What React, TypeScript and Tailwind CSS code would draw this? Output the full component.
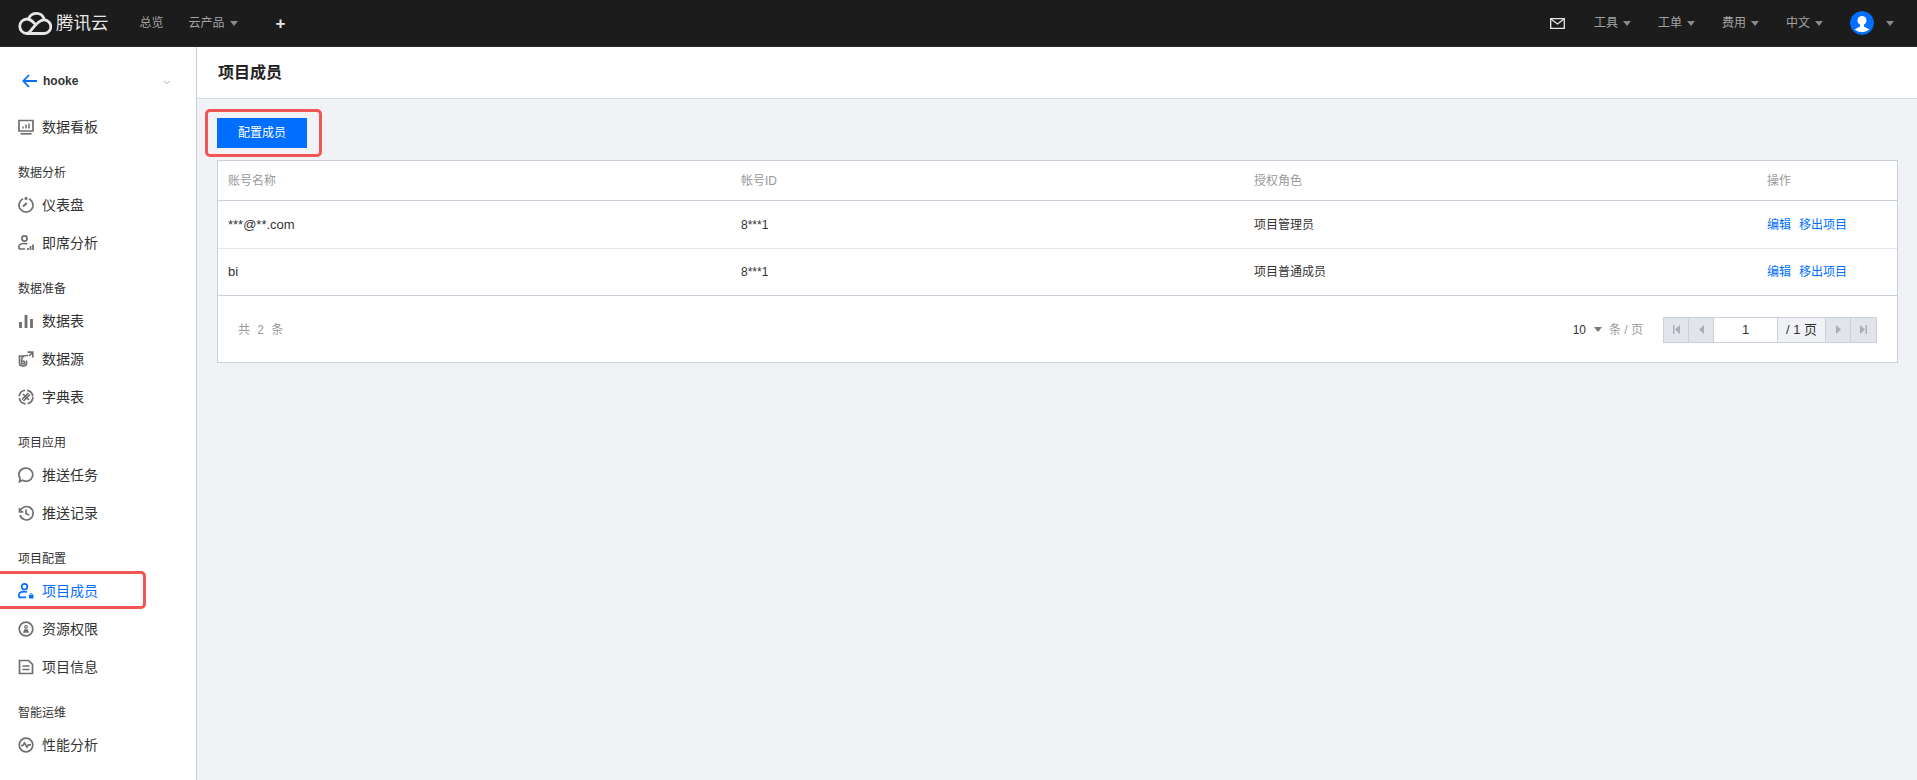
import type { ReactNode } from 'react';

const FONT = 'font-["Liberation_Sans","Noto_Sans_CJK_SC",sans-serif]';

function Caret({ className = 'border-t-[#8a8a8a]' }: { className?: string }) {
  return <span className={`inline-block w-0 h-0 border-x-[4px] border-x-transparent border-t-[5px] ${className}`} />;
}

function Logo() {
  return (
    <svg width="34" height="24" viewBox="0 0 34 24" fill="none" stroke="#e6e6e6" strokeWidth="2.800" strokeLinecap="round">
      <path d="M10.500 8.300a8.200 8.200 0 0 1 15.500-.8" />
      <path d="M9 22.500h17a6.800 6.800 0 0 0 0-13.600c-5 0-8.500 5.100-11.500 8.600-2 2.300-3.500 5-5.500 5a6.800 6.800 0 1 1 0-14.500c3 0 5.200 2 7 4" />
    </svg>
  );
}

function Icon({ children, color = '#6f6f6f' }: { children: ReactNode; color?: string }) {
  return (
    <svg width="16" height="16" viewBox="0 0 16 16" fill="none" stroke={color} strokeWidth="1.700" className="shrink-0">
      {children}
    </svg>
  );
}

const icons: Record<string, ReactNode> = {
  board: (
    <Icon>
      <path d="M1 1.500h14v10.500H1z" />
      <path d="M2.500 14.800h11" />
      <path d="M5 9.500V7.500M8 9.500V5.500M11 9.500V4.500" strokeWidth="1.500" />
    </Icon>
  ),
  gauge: (
    <Icon>
      <path d="M5 1.800a7 7 0 1 0 6 0" />
      <path d="M5 9.500l3.800-3.500" strokeWidth="2" />
      <circle cx="8" cy="1.500" r=".7" />
    </Icon>
  ),
  adhoc: (
    <Icon>
      <circle cx="6.500" cy="3.500" r="2.600" />
      <path d="M1 14v-2.500c0-2 2.500-3 5.500-3 1 0 2 .1 2.800.4M1 14h6" />
      <path d="M10 15v-2M12.500 15v-4M15 15V9.500" strokeWidth="1.800" />
    </Icon>
  ),
  bars: (
    <Icon>
      <path d="M2.500 15V9M8 15V2M13.500 15V6" strokeWidth="2.800" />
    </Icon>
  ),
  source: (
    <Icon>
      <path d="M6 5H1.500v7c0 2 1.500 3 3.500 3s3.500-1 3.500-3V9.500" />
      <path d="M3.500 10c0-3.500 2-5.500 5-5.500h1.500" />
      <path d="M9.500 1.200h5.300v5.300M14.500 1.500l-3.500 3.500" />
      <circle cx="5" cy="11.500" r="1.500" />
    </Icon>
  ),
  dict: (
    <Icon>
      <circle cx="8" cy="8" r="6.800" strokeDasharray="9 2" />
      <path d="M4 10.500L10.500 4M5.500 12L12 5.500" />
      <path d="M5 5l6 6" />
    </Icon>
  ),
  bubble: (
    <Icon>
      <path d="M8 1.200a6.800 6.500 0 1 1-3.500 12.100L1.500 14.800l.6-3.500A6.800 6.500 0 0 1 8 1.200z" />
    </Icon>
  ),
  history: (
    <Icon>
      <path d="M1.500 3v3.800h3.800" />
      <path d="M2 6.500a6.700 6.700 0 1 1 0 3.500" />
      <path d="M8 4.500V8.500l3 1.500" />
    </Icon>
  ),
  member: (
    <Icon color="#006eff">
      <circle cx="6.500" cy="3.700" r="2.800" />
      <path d="M1 14.500v-2.500c0-2.200 2.500-3.300 5.500-3.300 1 0 1.500.1 2.500.3M1 14.300h7" />
      <path d="M11 15.500v-3.500h4.500v3.500z" fill="#006eff" stroke="none" />
      <path d="M12 11.800a1.200 1.200 0 0 1 2.400 0" strokeWidth="1" />
    </Icon>
  ),
  lock: (
    <Icon>
      <circle cx="8" cy="8" r="6.800" />
      <circle cx="8" cy="5.800" r="1.300" strokeWidth="1.200" />
      <path d="M5 11.800h6L9.800 8.200H6.200z" fill="#6f6f6f" stroke="none" />
    </Icon>
  ),
  info: (
    <Icon>
      <path d="M1.500 1.500h9l4 3.800v9.200h-13z" />
      <path d="M4.500 7h7M4.500 10.500h7" />
    </Icon>
  ),
  perf: (
    <Icon>
      <circle cx="8" cy="8" r="6.800" />
      <path d="M3 8.500h1.800L6.500 6l2.500 4 1.500-2.200H13" />
    </Icon>
  ),
};

const NAV: { label: string; items: { name: string; icon: string; active?: boolean }[] }[] = [
  { label: '数据分析', items: [{ name: '仪表盘', icon: 'gauge' }, { name: '即席分析', icon: 'adhoc' }] },
  {
    label: '数据准备',
    items: [
      { name: '数据表', icon: 'bars' },
      { name: '数据源', icon: 'source' },
      { name: '字典表', icon: 'dict' },
    ],
  },
  { label: '项目应用', items: [{ name: '推送任务', icon: 'bubble' }, { name: '推送记录', icon: 'history' }] },
  {
    label: '项目配置',
    items: [
      { name: '项目成员', icon: 'member', active: true },
      { name: '资源权限', icon: 'lock' },
      { name: '项目信息', icon: 'info' },
    ],
  },
  { label: '智能运维', items: [{ name: '性能分析', icon: 'perf' }] },
];

function NavItem({ name, icon, active }: { name: string; icon: string; active?: boolean }) {
  return (
    <div className={`relative flex items-center gap-[8px] h-[38px] pl-[18px] text-[14px] ${active ? 'text-[#006eff]' : 'text-[#333]'}`}>
      {icons[icon]}
      <span>{name}</span>
      {active && (
        <span className="absolute left-[-4px] w-[150px] top-[-1px] h-[38px] border-[3px] border-[#f25555] rounded-[5px]" />
      )}
    </div>
  );
}

function TopNav({ label, left }: { label: string; left: string }) {
  return (
    <div className={`flex items-center gap-[5px] text-[12px] text-[#a3a3a3] ${left}`}>
      <span>{label}</span>
      <Caret />
    </div>
  );
}

function TopBar() {
  return (
    <header className="flex items-center h-[47px] bg-[#1c1c1c] border-b border-[#2a2a2a] shrink-0">
      <div className="flex items-center pl-[18px]">
        <Logo />
        <span className="ml-[4px] text-[17.500px] text-[#e6e6e6]">腾讯云</span>
      </div>
      <span className="ml-[31px] text-[12px] text-[#a3a3a3]">总览</span>
      <TopNav label="云产品" left="ml-[25px]" />
      <span className="ml-[38px] text-[17px] leading-none font-bold text-[#e6e6e6]">+</span>
      <div className="flex items-center ml-auto pr-[23px]">
        <svg width="15" height="11" viewBox="0 0 15 11" fill="none" stroke="#e6e6e6" strokeWidth="1.300">
          <path d="M.7.7h13.600v9.600H.7z" />
          <path d="M1 1l6.500 5L14 1" />
        </svg>
        <TopNav label="工具" left="ml-[29px]" />
        <TopNav label="工单" left="ml-[27px]" />
        <TopNav label="费用" left="ml-[27px]" />
        <TopNav label="中文" left="ml-[27px]" />
        <svg width="24" height="24" viewBox="0 0 24 24" className="ml-[27px] rounded-full">
          <circle cx="12" cy="12" r="12" fill="#006eff" />
          <circle cx="12" cy="9.500" r="4.500" fill="#fff" />
          <path d="M10 13h4v2.500l5.500 3a12 12 0 0 1-15 0l5.500-3z" fill="#fff" />
        </svg>
        <Caret className="ml-[12px] border-t-[#8a8a8a]" />
      </div>
    </header>
  );
}

function Sidebar() {
  return (
    <aside className="w-[197px] shrink-0 bg-white border-r border-[#c9d0dc] overflow-hidden">
      <div className="relative flex items-center h-[61px] pt-[6px] pl-[22px]">
        <svg width="15" height="14" viewBox="0 0 15 14" fill="none" stroke="#006eff" strokeWidth="1.800">
          <path d="M15 7H1.500M7 1L1.300 7 7 13" />
        </svg>
        <span className="ml-[6px] text-[12px] font-bold text-[#333]">hooke</span>
        <svg width="8" height="5" viewBox="0 0 8 5" fill="none" stroke="#b5b5b5" className="absolute left-[163px] top-[33px]">
          <path d="M1 1l3 2.500L7 1" />
        </svg>
      </div>
      <NavItem name="数据看板" icon="board" />
      {NAV.map((group) => (
        <div key={group.label} className="mt-[12px]">
          <div className="flex items-center h-[28px] pt-[2px] pl-[18px] text-[12px] text-[#333]">{group.label}</div>
          {group.items.map((item) => (
            <NavItem key={item.name} {...item} />
          ))}
        </div>
      ))}
    </aside>
  );
}

const COLS = 'grid grid-cols-[513px_513px_513px_1fr]';

function Row({ name, id, role, last }: { name: string; id: string; role: string; last?: boolean }) {
  return (
    <div className={`${COLS} items-center text-[12px] text-[#333] ${last ? 'h-[47px] border-b border-[#c9d0dc]' : 'h-[48px] border-b border-[#e3e6ee]'}`}>
      <div className="pl-[10px] text-[13px]">{name}</div>
      <div className="pl-[10px]">{id}</div>
      <div className="pl-[10px]">{role}</div>
      <div className="pl-[10px] flex gap-[8px] text-[#006eff]">
        <span>编辑</span>
        <span>移出项目</span>
      </div>
    </div>
  );
}

function PageButton({ children }: { children: ReactNode }) {
  return (
    <span className="flex items-center justify-center w-[25px] h-full bg-[#e1e4ea] border-r border-[#c9d0dc] last:border-r-0">
      {children}
    </span>
  );
}

function Pager() {
  const fill = '#a9aeb8';
  return (
    <div className="flex items-stretch h-[26px] border border-[#c9d0dc] text-[12px] text-[#333]">
      <PageButton>
        <svg width="7" height="9" viewBox="0 0 7 9" fill={fill}><path d="M0 0h1.500v9H0zM7 0v9L2 4.500z" /></svg>
      </PageButton>
      <PageButton>
        <svg width="5" height="9" viewBox="0 0 5 9" fill={fill}><path d="M5 0v9L0 4.500z" /></svg>
      </PageButton>
      <span className="flex items-center justify-center w-[64px] bg-white border-r border-[#c9d0dc] text-[13px]">1</span>
      <span className="flex items-center justify-center w-[48px] bg-[#f0f2f6] border-r border-[#c9d0dc] text-[13px]">/ 1 页</span>
      <PageButton>
        <svg width="5" height="9" viewBox="0 0 5 9" fill={fill}><path d="M0 0v9l5-4.500z" /></svg>
      </PageButton>
      <PageButton>
        <svg width="7" height="9" viewBox="0 0 7 9" fill={fill}><path d="M0 0v9l5-4.500zM5.500 0H7v9H5.500z" /></svg>
      </PageButton>
    </div>
  );
}

function MemberTable() {
  return (
    <div className="mt-[12px] bg-white border border-[#c9d0dc]">
      <div className={`${COLS} items-center h-[40px] border-b border-[#c9d0dc] text-[12px] text-[#999]`}>
        <div className="pl-[10px]">账号名称</div>
        <div className="pl-[10px]">帐号ID</div>
        <div className="pl-[10px]">授权角色</div>
        <div className="pl-[10px]">操作</div>
      </div>
      <Row name="***@**.com" id="8***1" role="项目管理员" />
      <Row name="bi" id="8***1" role="项目普通成员" last />
      <div className="flex items-center h-[66px] pt-[1px] pl-[20px] pr-[20px] text-[12px] text-[#999]">
        <span className="tracking-[0.5px] [word-spacing:3px]">共 2 条</span>
        <div className="ml-auto flex items-center">
          <span className="text-[12px] text-[#333]">10</span>
          <Caret className="ml-[8px] border-t-[#777]" />
          <span className="ml-[7px] mr-[20px]">条 / 页</span>
          <Pager />
        </div>
      </div>
    </div>
  );
}

export default function App() {
  return (
    <div className={`flex flex-col h-[780px] w-full overflow-hidden bg-[#f0f2f6] ${FONT}`}>
      <TopBar />
      <div className="flex flex-1 min-h-0">
        <Sidebar />
        <main className="flex-1 min-w-0">
          <div className="flex items-center h-[52px] pl-[21px] bg-white border-b border-[#d5d8de] text-[16px] font-bold text-[#222]">
            项目成员
          </div>
          <div className="pl-[20px] pr-[19px] pt-[19px]">
            <div className="relative w-[90px] h-[30px]">
              <button type="button" className="w-full h-full bg-[#006eff] text-white text-[12px]">
                配置成员
              </button>
              <span className="absolute left-[-12px] top-[-9px] w-[117px] h-[48px] border-[3px] border-[#f25555] rounded-[5px]" />
            </div>
            <MemberTable />
          </div>
        </main>
      </div>
    </div>
  );
}
